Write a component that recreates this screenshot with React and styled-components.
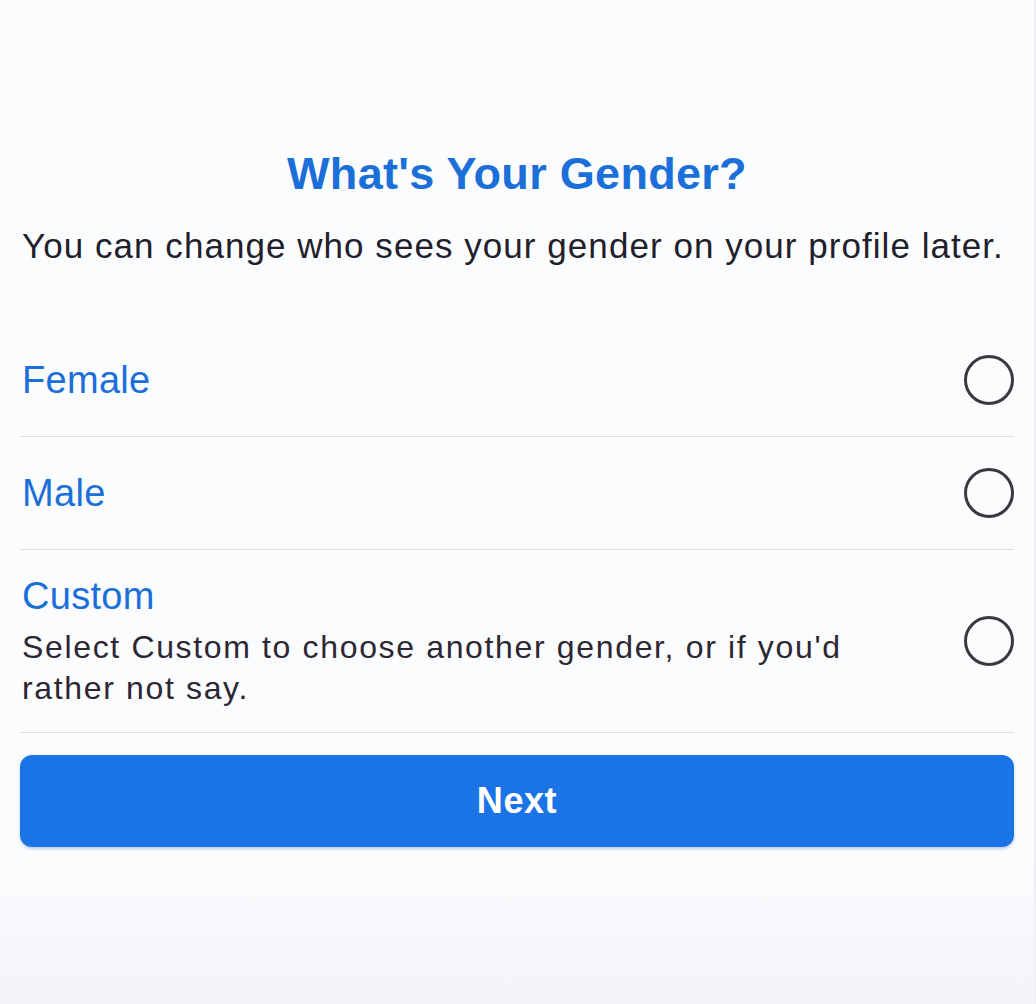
import styled, { createGlobalStyle } from "styled-components"

const GlobalStyle = createGlobalStyle`
    html, body {
        margin: 0;
        padding: 0;
    }
    body {
        font-family: "Liberation Sans", Arial, sans-serif;
        background: #fbfcfe;
    }
`;

const Page = styled.div`
    box-sizing: border-box;
    min-height: 1004px;
    padding: 147px 20px 0 20px;
    background: linear-gradient(
        to bottom,
        #fbfcfe 0%,
        #fbfcfe 86%,
        #f3f4f7 100%
    );
    border-right: 2px solid #eef0f3;
`;

const Title = styled.h1`
    margin: 0;
    text-align: center;
    font-size: 45px;
    line-height: 54px;
    font-weight: bold;
    color: #1b6fd8;
    letter-spacing: 0.3px;
`;

const Subtitle = styled.p`
    margin: 23px 0 0 2px;
    font-size: 35px;
    line-height: 44px;
    color: #231e2c;
    letter-spacing: 1.05px;
    white-space: nowrap;
`;

const List = styled.div`
    display: flex;
    flex-direction: column;
    margin-top: 56px;
`;

const Option = styled.label`
    box-sizing: border-box;
    display: flex;
    align-items: center;
    gap: 70px;
    min-height: ${(props) => (props.$tall ? 183 : 113)}px;
    padding: 23px 0 23px 2px;
    border-bottom: 1px solid #dcdee2;
    cursor: pointer;
`;

const OptionText = styled.div`
    flex: 1;
    display: flex;
    flex-direction: column;
    gap: 8px;
`;

const OptionLabel = styled.span`
    font-size: 38px;
    line-height: 46px;
    color: #1b6fd8;
    letter-spacing: 0.3px;
`;

const OptionHint = styled.span`
    font-size: 32px;
    line-height: 41px;
    color: #2c2733;
    letter-spacing: 1.65px;
`;

const Radio = styled.span`
    flex: none;
    width: 50px;
    height: 50px;
    box-sizing: border-box;
    border-radius: 50%;
    border: 3px solid #3a393e;
`;

const NextButton = styled.button`
    display: block;
    width: 100%;
    height: 92px;
    margin-top: 22px;
    border: none;
    border-radius: 12px;
    background: #1b74e6;
    color: #ffffff;
    font-family: "Liberation Sans", Arial, sans-serif;
    font-size: 36px;
    font-weight: bold;
    letter-spacing: 0.6px;
    box-shadow: 0 2px 3px rgba(20, 80, 160, 0.25);
    cursor: pointer;
`;

const options = [
    { label: "Female" },
    { label: "Male" },
    {
        label: "Custom",
        hint: "Select Custom to choose another gender, or if you'd rather not say.",
    },
];

function App() {
    return (
        <>
            <GlobalStyle />
            <Page>
                <Title>What's Your Gender?</Title>
                <Subtitle>
                    You can change who sees your gender on your profile later.
                </Subtitle>
                <List>
                    {options.map((opt) => (
                        <Option key={opt.label} $tall={!!opt.hint}>
                            <OptionText>
                                <OptionLabel>{opt.label}</OptionLabel>
                                {opt.hint && <OptionHint>{opt.hint}</OptionHint>}
                            </OptionText>
                            <Radio />
                        </Option>
                    ))}
                </List>
                <NextButton>Next</NextButton>
            </Page>
        </>
    );
}

export default App;
